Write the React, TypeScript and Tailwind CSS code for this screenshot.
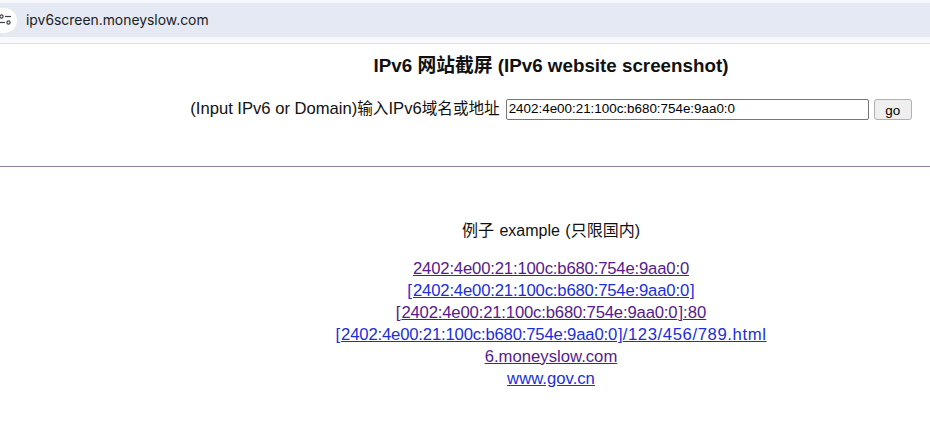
const addr = "2402:4e00:21:100c:b680:754e:9aa0:0";

const visited = "underline text-[#551a8b]";
const unvisited = "underline text-[#1a2fd8]";

const App = () => {
  return (
    <div className="w-[930px] h-[436px] overflow-hidden bg-white text-[#111111] font-['Liberation_Sans','Noto_Sans_CJK_SC',sans-serif]">
      {/* Browser bar */}
      <div className="h-[44px] bg-[#f8f9fd] border-b border-[#dfe1e5] pt-[3px]">
        <div className="h-[34px] bg-[#e4e9f3] flex items-center">
          <div className="w-[36px] h-[25px] -ml-[19px] rounded-full bg-white flex items-center justify-center shrink-0">
            <svg width="14" height="12" viewBox="0 0 14 12" fill="none" stroke="#3c4043" strokeWidth="1.2" className="ml-[13px]">
              <circle cx="2.5" cy="2.5" r="1.6" />
              <path d="M6 2.5h6" />
              <path d="M0 8.5h6" />
              <circle cx="9.5" cy="8.5" r="1.6" />
            </svg>
          </div>
          <span className="ml-[9px] text-[13.9px] text-[#202124] font-['Inter',sans-serif]">ipv6screen.moneyslow.com</span>
        </div>
      </div>

      {/* Page */}
      <div className="pl-[172px]">
        <h1 className="mt-[10px] text-center text-[18.8px] leading-[24px] font-bold">
          IPv6 网站截屏 (IPv6 website screenshot)
        </h1>
        <form className="mt-[20px] flex items-center justify-center text-[16.6px] leading-[22px]">
          <label>
            (Input IPv6 or Domain)<span className="text-[15.6px]">输入</span>IPv6<span className="text-[15.6px]">域名或地址</span>
          </label>
          <input
            readOnly
            value={addr}
            className="ml-[6px] w-[363px] h-[21px] px-[2px] text-[13.4px] text-black border border-[#767676] rounded-[2px] bg-white outline-none"
          />
          <button type="button" className="ml-[5px] w-[38px] h-[21px] text-[13.4px] text-black border border-[#b0b0b0] rounded-[3px] bg-[#efefef]">
            go
          </button>
        </form>
      </div>
      <hr className="mt-[46px] border-t border-[#8f7f9f]" />
      <div className="pl-[172px]">
        <p className="mt-[53px] text-center text-[16px] leading-[22px] [word-spacing:1px]">例子 example (只限国内)</p>
        <div className="mt-[16px] flex flex-col items-center text-[16.7px] leading-[22px]">
          <a href="#" className={visited}>
            <span className="tracking-[-0.18px]">{addr}</span>
          </a>
          <a href="#" className={unvisited}>
            <span className="pr-[1px]">[</span><span className="tracking-[-0.18px]">{addr}</span><span className="pl-[1px]">]</span>
          </a>
          <a href="#" className={visited}>
            <span className="pr-[1px]">[</span><span className="tracking-[-0.18px]">{addr}</span><span className="pl-[1px]">]</span>:80
          </a>
          <a href="#" className={unvisited}>
            <span className="pr-[1px]">[</span><span className="tracking-[-0.18px]">{addr}</span><span className="pl-[1px]">]</span><span className="tracking-[0.6px]">/123/456/789.html</span>
          </a>
          <a href="#" className={visited}>
            6.moneyslow.com
          </a>
          <a href="#" className={unvisited}>
            www.gov.cn
          </a>
        </div>
      </div>
    </div>
  );
};

export default App;
